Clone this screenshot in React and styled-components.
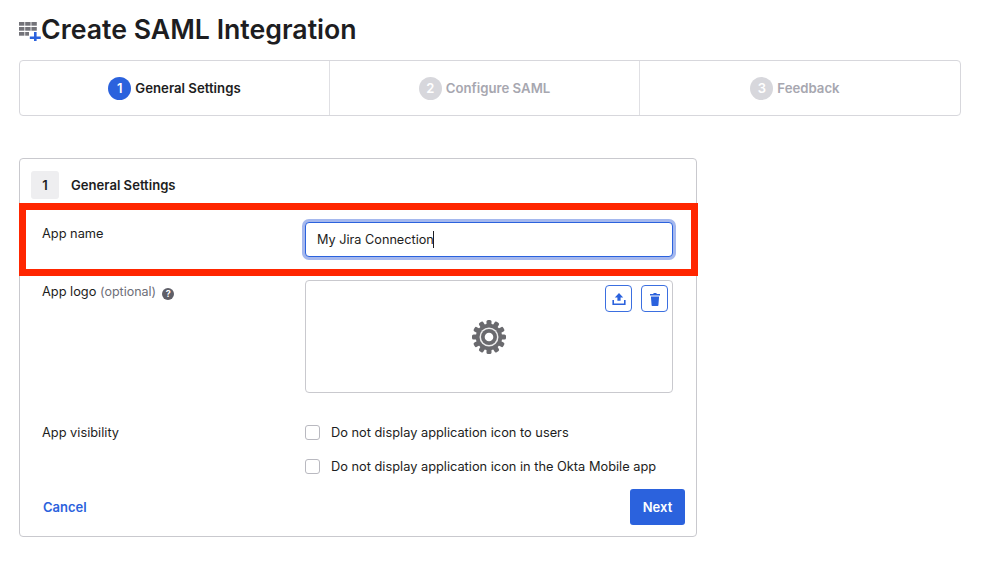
import styled, { createGlobalStyle } from 'styled-components';

const GlobalStyle = createGlobalStyle`
  html, body {
    margin: 0;
    padding: 0;
    background: #fff;
    font-family: 'Inter', 'Liberation Sans', sans-serif;
    color: #1d1d21;
  }
  * { box-sizing: border-box; }
`;

const steps = [
  { id: 1, label: 'General Settings', active: true },
  { id: 2, label: 'Configure SAML' },
  { id: 3, label: 'Feedback' },
];

const gearTeeth = Array.from({ length: 12 }, (_, i) => i * 30);

const AddAppIcon = () => (
  <svg width="24" height="24" viewBox="0 0 24 24">
    <g fill="#737379">
      <rect x="0" y="5" width="5.400" height="3.700" />
      <rect x="6.200" y="5" width="5.400" height="3.700" />
      <rect x="12.400" y="5" width="5.400" height="3.700" />
      <rect x="0" y="10" width="5.400" height="3.700" />
      <rect x="6.200" y="10" width="5.400" height="3.700" />
      <rect x="12.400" y="10" width="5.400" height="3.700" />
      <rect x="0" y="15" width="5.400" height="3.700" />
      <rect x="6.200" y="15" width="3.800" height="3.700" />
    </g>
    <path d="M16.300 15v11M10.800 20.700h11" stroke="#2b62dd" strokeWidth="2.600" fill="none" />
  </svg>
);

const UploadIcon = () => (
  <svg width="14" height="14" viewBox="0 0 14 14" fill="none">
    <path d="M7 1 2.800 5.600h2.600v3.200h3.200V5.600h2.600z" fill="#2b62dd" />
    <path d="M1.200 8v4.300h11.600V8" stroke="#2b62dd" strokeWidth="1.600" />
  </svg>
);

const TrashIcon = () => (
  <svg width="14" height="14" viewBox="0 0 14 14">
    <path
      d="M2 2h3.200l.5-1h2.600l.5 1H12v1.600H2zM2.900 4.600h8.200l-.7 8.600a.8.8 0 0 1-.8.8H4.400a.8.8 0 0 1-.8-.8z"
      fill="#2b62dd"
    />
  </svg>
);

const GearIcon = () => (
  <svg width="36" height="36" viewBox="0 0 36 36">
    <g fill="#6a6a6e">
      {gearTeeth.map((angle) => (
        <rect key={angle} x="15.500" y="1" width="5" height="6" rx="1.600" transform={`rotate(${angle} 18 18)`} />
      ))}
    </g>
    <circle cx="18" cy="18" r="13.200" fill="#6a6a6e" />
    <circle cx="18" cy="18" r="9.500" fill="#eeeeee" />
    <circle cx="18" cy="18" r="8" fill="#6a6a6e" />
    <circle cx="18" cy="18" r="4.300" fill="#fff" />
  </svg>
);

const App = () => (
  <Page>
    <GlobalStyle />
    <TitleRow>
      <AddAppIcon />
      <Title>Create SAML Integration</Title>
    </TitleRow>

    <Stepper>
      {steps.map((step) => (
        <Step key={step.id}>
          <StepNumber $active={step.active}>{step.id}</StepNumber>
          <StepLabel $active={step.active}>{step.label}</StepLabel>
        </Step>
      ))}
    </Stepper>

    <Panel>
      <PanelHeader>
        <PanelNumber>1</PanelNumber>
        <PanelTitle>General Settings</PanelTitle>
      </PanelHeader>

      <NameRow>
        <Label>App name</Label>
        <NameInput readOnly value="My Jira Connection" />
        <Caret />
        <Highlight />
      </NameRow>

      <LogoRow>
        <Label>
          App logo <Optional>(optional)</Optional>
          <Help>?</Help>
        </Label>
        <LogoBox>
          <LogoActions>
            <IconButton>
              <UploadIcon />
            </IconButton>
            <IconButton>
              <TrashIcon />
            </IconButton>
          </LogoActions>
          <GearIcon />
        </LogoBox>
      </LogoRow>

      <VisibilityRow>
        <Label>App visibility</Label>
        <Checks>
          <CheckRow>
            <Checkbox />
            Do not display application icon to users
          </CheckRow>
          <CheckRow>
            <Checkbox />
            Do not display application icon in the Okta Mobile app
          </CheckRow>
        </Checks>
      </VisibilityRow>

      <Footer>
        <CancelLink>Cancel</CancelLink>
        <NextButton>Next</NextButton>
      </Footer>
    </Panel>
  </Page>
);

const Page = styled.div`
  width: 999px;
  height: 567px;
  padding: 14px 0 0 19px;
  overflow: hidden;
`;

const TitleRow = styled.div`
  display: flex;
  align-items: center;
  height: 30px;
`;

const Title = styled.h1`
  margin: 0 0 0 -2px;
  font-size: 26.700px;
  font-weight: 600;
  line-height: 30px;
  color: #1d1d21;
`;

const Stepper = styled.div`
  display: grid;
  grid-template-columns: 309px 310px 1fr;
  width: 942px;
  height: 56px;
  margin-top: 16px;
  border: 1px solid #d7d7dc;
  border-radius: 4px;
`;

const Step = styled.div`
  display: flex;
  align-items: center;
  justify-content: center;
  gap: 4px;

  & + & {
    border-left: 1px solid #e0e0e4;
  }

  &:last-child {
    padding-right: 10px;
  }
`;

const StepNumber = styled.span`
  display: grid;
  place-items: center;
  width: 23px;
  height: 23px;
  border-radius: 50%;
  background: ${(props) => (props.$active ? '#2b62dd' : '#d7d7dc')};
  color: #fff;
  font-size: 13px;
  font-weight: 600;
`;

const StepLabel = styled.span`
  font-size: 13.200px;
  font-weight: 600;
  color: ${(props) => (props.$active ? '#1d1d21' : '#a7a7b0')};
`;

const Panel = styled.section`
  width: 678px;
  height: 379px;
  margin-top: 42px;
  border: 1px solid #c9c9ce;
  border-radius: 4px;
  padding: 12px 11px 0 11px;
`;

const PanelHeader = styled.div`
  display: flex;
  align-items: center;
  gap: 12px;
  height: 28px;
`;

const PanelNumber = styled.span`
  display: grid;
  place-items: center;
  width: 28px;
  height: 28px;
  border-radius: 3px;
  background: #eeeef0;
  font-size: 13px;
  font-weight: 600;
`;

const PanelTitle = styled.h2`
  margin: 0;
  font-size: 13.100px;
  font-weight: 600;
`;

const NameRow = styled.div`
  position: relative;
  display: grid;
  grid-template-columns: 263px 368px;
  margin-top: 23px;
  padding-left: 11px;
  height: 35px;
`;

const Label = styled.div`
  padding-top: 4px;
  font-size: 12.800px;
  line-height: 16px;
  color: #1d1d21;
`;

const NameInput = styled.input`
  width: 368px;
  height: 35px;
  padding: 0 11px;
  border: 1px solid #2b62dd;
  border-radius: 4px;
  box-shadow: 0 0 0 3px #a5b8ee;
  outline: none;
  font-family: inherit;
  font-size: 12.700px;
  color: #1d1d21;
`;

const Caret = styled.span`
  position: absolute;
  left: 402px;
  top: 9px;
  width: 1px;
  height: 17px;
  background: #1d1d21;
`;

const Highlight = styled.div`
  position: absolute;
  left: -12px;
  top: -19px;
  width: 679px;
  height: 73px;
  border: 7px solid #ff2600;
  pointer-events: none;
`;

const LogoRow = styled.div`
  display: grid;
  grid-template-columns: 263px 368px;
  margin-top: 23px;
  padding-left: 11px;
`;

const Optional = styled.span`
  font-size: 12.500px;
  color: #6e6e78;
`;

const Help = styled.span`
  display: inline-grid;
  place-items: center;
  width: 12px;
  height: 12px;
  margin-left: 6px;
  border-radius: 50%;
  background: #5f5f68;
  color: #fff;
  font-size: 9px;
  line-height: 12px;
  font-weight: 700;
  vertical-align: -1px;
`;

const LogoBox = styled.div`
  position: relative;
  display: grid;
  place-items: center;
  width: 368px;
  height: 113px;
  border: 1px solid #c9c9ce;
  border-radius: 4px;
`;

const LogoActions = styled.div`
  position: absolute;
  top: 4px;
  right: 4px;
  display: flex;
  gap: 9px;
`;

const IconButton = styled.button`
  display: grid;
  place-items: center;
  width: 27px;
  height: 27px;
  padding: 0;
  background: #fff;
  border: 1px solid #3b6fe0;
  border-radius: 4px;
`;

const VisibilityRow = styled.div`
  display: grid;
  grid-template-columns: 263px 1fr;
  margin-top: 28px;
  padding-left: 11px;
`;

const Checks = styled.div`
  display: flex;
  flex-direction: column;
  gap: 12px;
`;

const CheckRow = styled.label`
  display: flex;
  align-items: center;
  gap: 11px;
  height: 22px;
  font-size: 12.800px;
  color: #1d1d21;
`;

const Checkbox = styled.span`
  width: 15px;
  height: 15px;
  border: 1.500px solid #b9b9c0;
  border-radius: 3px;
  background: #fff;
`;

const Footer = styled.div`
  display: flex;
  align-items: center;
  justify-content: space-between;
  margin-top: 12px;
  padding-left: 12px;
`;

const CancelLink = styled.a`
  font-size: 13px;
  font-weight: 600;
  color: #2b62dd;
`;

const NextButton = styled.button`
  width: 55px;
  height: 36px;
  padding: 0;
  border: none;
  border-radius: 3px;
  background: #2b62dd;
  color: #fff;
  font-family: inherit;
  font-size: 13px;
  font-weight: 600;
`;

export default App;
